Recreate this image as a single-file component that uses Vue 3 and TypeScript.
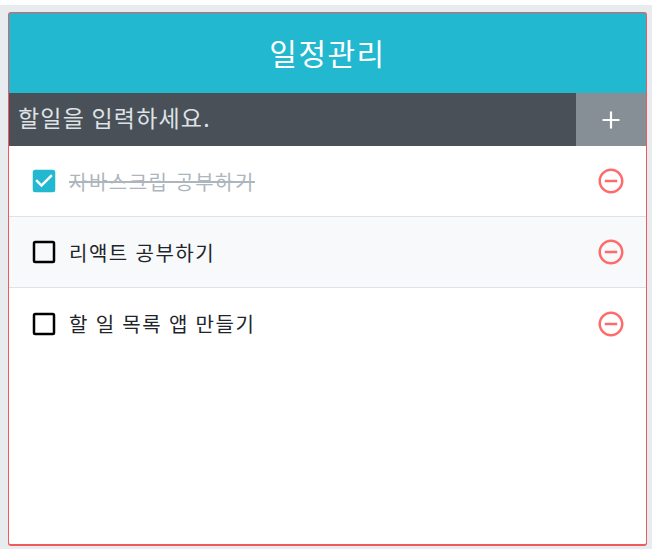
<template>
  <div class="page">
    <div class="template">
      <div class="title">일정관리</div>
      <form class="insert" @submit.prevent>
        <input class="insert-input" placeholder="할일을 입력하세요." />
        <button class="insert-btn" type="button">
          <svg viewBox="0 0 24 24" width="24" height="24"><path d="M12 3.500v17M3.500 12h17" /></svg>
        </button>
      </form>
      <div class="list">
        <div v-for="todo in todos" :key="todo.id" class="item">
          <div class="check" :class="{ checked: todo.checked }">
            <svg v-if="todo.checked" viewBox="0 0 24 24" width="30" height="30" class="box-on">
              <path d="M19 3H5a2 2 0 0 0-2 2v14a2 2 0 0 0 2 2h14a2 2 0 0 0 2-2V5a2 2 0 0 0-2-2zm-9 14l-5-5 1.41-1.41L10 14.17l7.59-7.59L19 8l-9 9z" />
            </svg>
            <svg v-else viewBox="0 0 24 24" width="30" height="30" class="box-off">
              <path d="M19 5v14H5V5h14m0-2H5a2 2 0 0 0-2 2v14a2 2 0 0 0 2 2h14a2 2 0 0 0 2-2V5a2 2 0 0 0-2-2z" />
            </svg>
            <span class="text">{{ todo.text }}</span>
          </div>
          <div class="remove">
            <svg viewBox="0 0 24 24" width="30" height="30">
              <path d="M7 11v2h10v-2H7zm5-9C6.48 2 2 6.48 2 12s4.48 10 10 10 10-4.48 10-10S17.52 2 12 2zm0 18c-4.41 0-8-3.59-8-8s3.590-8 8-8 8 3.59 8 8-3.59 8-8 8z" />
            </svg>
          </div>
        </div>
      </div>
    </div>
  </div>
</template>

<script setup lang="ts">
const todos = [
  { id: 1, text: '자바스크립 공부하기', checked: true },
  { id: 2, text: '리액트 공부하기', checked: false },
  { id: 3, text: '할 일 목록 앱 만들기', checked: false },
]
</script>

<style>
body {
  margin: 0;
  background: #fff;
}
</style>

<style scoped>
.page {
  box-sizing: border-box;
  height: 549px;
  padding-top: 5px;
  font-family: 'Noto Sans CJK KR', 'Noto Sans', sans-serif;
}

.template {
  box-sizing: border-box;
  height: 100%;
  background: #e9ecef;
  padding: 7px 5px 3px 8px;
}

.template > * {
  border-left: 1px solid #ef5a5f;
  border-right: 1px solid #ef5a5f;
}

.title {
  box-sizing: border-box;
  height: 81px;
  padding-bottom: 3px;
  background: #22b8cf;
  border-top: 1px solid #ef5a5f;
  border-radius: 3px 3px 0 0;
  color: #fff;
  font-size: 30px;
  letter-spacing: 1.5px;
  display: flex;
  align-items: center;
  justify-content: center;
}

.insert {
  display: flex;
  background: #495057;
  height: 53px;
}

.insert-input {
  flex: 1;
  min-width: 0;
  background: none;
  border: none;
  outline: none;
  padding: 0 9px 6px;
  font-family: inherit;
  font-size: 23px;
  letter-spacing: 1.2px;
  color: #fff;
}

.insert-input::placeholder {
  color: #dee2e6;
}

.insert-btn {
  width: 70px;
  border: none;
  background: #868e96;
  color: #fff;
  display: flex;
  align-items: center;
  justify-content: center;
  padding: 0;
}

.insert-btn path {
  stroke: #fff;
  stroke-width: 2.200;
  fill: none;
}

.list {
  box-sizing: border-box;
  height: 400px;
  background: #fff;
  border-bottom: 2px solid #ef5a5f;
  border-radius: 0 0 3px 3px;
}

.item {
  display: flex;
  align-items: center;
  justify-content: space-between;
  box-sizing: border-box;
  height: 71px;
  padding: 0 20px;
  border-bottom: 1px solid #dee2e6;
}

.item:nth-child(even) {
  background: #f8f9fa;
}

.item:last-child {
  border-bottom: none;
}

.check {
  display: flex;
  align-items: center;
  font-size: 20px;
}

.box-on path {
  fill: #22b8cf;
}

.box-off path {
  fill: #000;
}

.text {
  margin-left: 10px;
  letter-spacing: 1.5px;
  word-spacing: 0.8px;
  color: #212529;
}

.checked .text {
  color: #adb5bd;
  text-decoration: line-through;
}

.remove {
  display: flex;
}

.remove path {
  fill: #ff6b6b;
}
</style>
